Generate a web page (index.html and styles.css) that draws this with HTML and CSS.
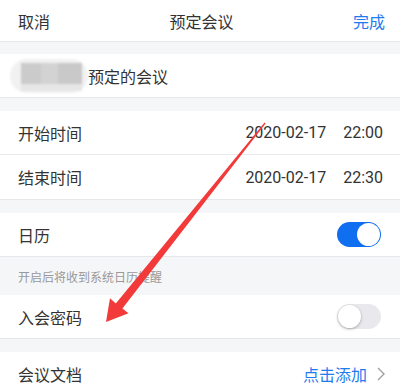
FILE: index.html
```html
<!DOCTYPE html>
<html lang="zh">
<head>
<meta charset="utf-8">
<link rel="stylesheet" href="styles.css">
</head>
<body>
<div class="page">
  <div class="header">
    <span class="hbtn">取消</span>
    <span class="htitle">预定会议</span>
    <span class="hbtn blue">完成</span>
  </div>
  <div class="gap g12"></div>
  <div class="group">
    <div class="row last titlerow">
      <div class="blur"><div class="blur-in"></div></div>
      <span class="label">预定的会议</span>
    </div>
  </div>
  <div class="gap"></div>
  <div class="group">
    <div class="row">
      <span class="label">开始时间</span>
      <span class="value"><span>2020-02-17</span><span>22:00</span></span>
    </div>
    <div class="row last tall">
      <span class="label">结束时间</span>
      <span class="value"><span>2020-02-17</span><span>22:30</span></span>
    </div>
  </div>
  <div class="gap"></div>
  <div class="group">
    <div class="row last">
      <span class="label">日历</span>
      <span class="switch on"><span class="knob"></span></span>
    </div>
  </div>
  <div class="hint">开启后将收到系统日历提醒</div>
  <div class="group">
    <div class="row last">
      <span class="label">入会密码</span>
      <span class="switch"><span class="knob"></span></span>
    </div>
  </div>
  <div class="gap"></div>
  <div class="group">
    <div class="row">
      <span class="label">会议文档</span>
      <span class="link">点击添加<svg class="chev" width="8" height="14" viewBox="0 0 8 14"><polyline points="1,1 7,7 1,13" fill="none" stroke="#a0a0a0" stroke-width="1.4"/></svg></span>
    </div>
  </div>
  <svg class="arrow" width="400" height="386" viewBox="0 0 400 386">
    <polygon fill="#f23a3a" points="265.6,123.4 122.4,308.4 128.5,313.2 106,322 110,298.2 115.8,303.4 264.6,122.6"/>
  </svg>
</div>
</body>
</html>
```
FILE: styles.css
```css
* { box-sizing: border-box; margin: 0; padding: 0; }
html, body { width: 400px; height: 386px; overflow: hidden; }
body {
  background: #f5f6f8;
  font-family: "Noto Sans CJK SC", "Noto Sans", sans-serif;
  color: #333;
}
.page { position: relative; width: 400px; height: 386px; }
.header {
  height: 42px;
  background: #fff;
  border-bottom: 1px solid #e6e7ea;
  display: flex;
  align-items: center;
  justify-content: space-between;
  padding: 0 15px 0 18px;
  font-size: 16px;
}
.hbtn { width: 40px; color: #333; line-height: 20px; }
.hbtn.blue { color: #1f7bf0; text-align: right; }
.htitle { color: #333; }
.gap { height: 13px; }
.gap.g12 { height: 12px; }
.group { background: #fff; }
.row {
  height: 44px;
  display: flex;
  align-items: center;
  justify-content: space-between;
  padding: 0 18px;
  border-bottom: 1px solid #e8e9ec;
  font-size: 16px;
}
.row.tall { height: 45px; }
.row.last { border-bottom: 1px solid #e6e7ea; }
.titlerow { justify-content: flex-start; padding-left: 10px; }
.label { color: #333; }
.blur {
  width: 78px;
  height: 34px;
  border-radius: 17px;
  background: #f1f1f1;
  position: relative;
  filter: blur(1px);
  margin-right: 0;
}
.blur-in {
  position: absolute;
  left: 11px;
  top: 4px;
  width: 61px;
  height: 21px;
  background: linear-gradient(90deg, #cbcbcb 0 33%, #d3d3d3 33% 60%, #c9c9c9 60%);
}
.blur::after {
  content: "";
  position: absolute;
  left: 11px;
  top: 25px;
  width: 61px;
  height: 7px;
  background: #e6e6e6;
}
.value {
  font-family: Roboto, "Noto Sans", sans-serif;
  font-size: 16px;
  color: #333;
  display: flex;
  gap: 17px;
  margin-right: -1px;
}
.switch {
  width: 44px;
  height: 25px;
  border-radius: 13px;
  background: #e9e9ed;
  position: relative;
  margin-right: 1px;
}
.switch .knob {
  position: absolute;
  left: 1px;
  top: 1px;
  width: 23px;
  height: 23px;
  border-radius: 50%;
  background: #fff;
  box-shadow: 0 1px 3px rgba(0,0,0,0.3);
}
.switch.on { background: #0f6ff0; }
.switch.on .knob { left: 20px; box-shadow: none; }
.hint {
  height: 38px;
  padding: 0 18px;
  display: flex;
  align-items: center;
  font-size: 12px;
  color: #999;
}
.link {
  color: #1f7bf0;
  display: flex;
  align-items: center;
  gap: 10px;
  margin-right: -3px;
}
.chev { display: block; }
.arrow { position: absolute; left: 0; top: 0; pointer-events: none; }
```
